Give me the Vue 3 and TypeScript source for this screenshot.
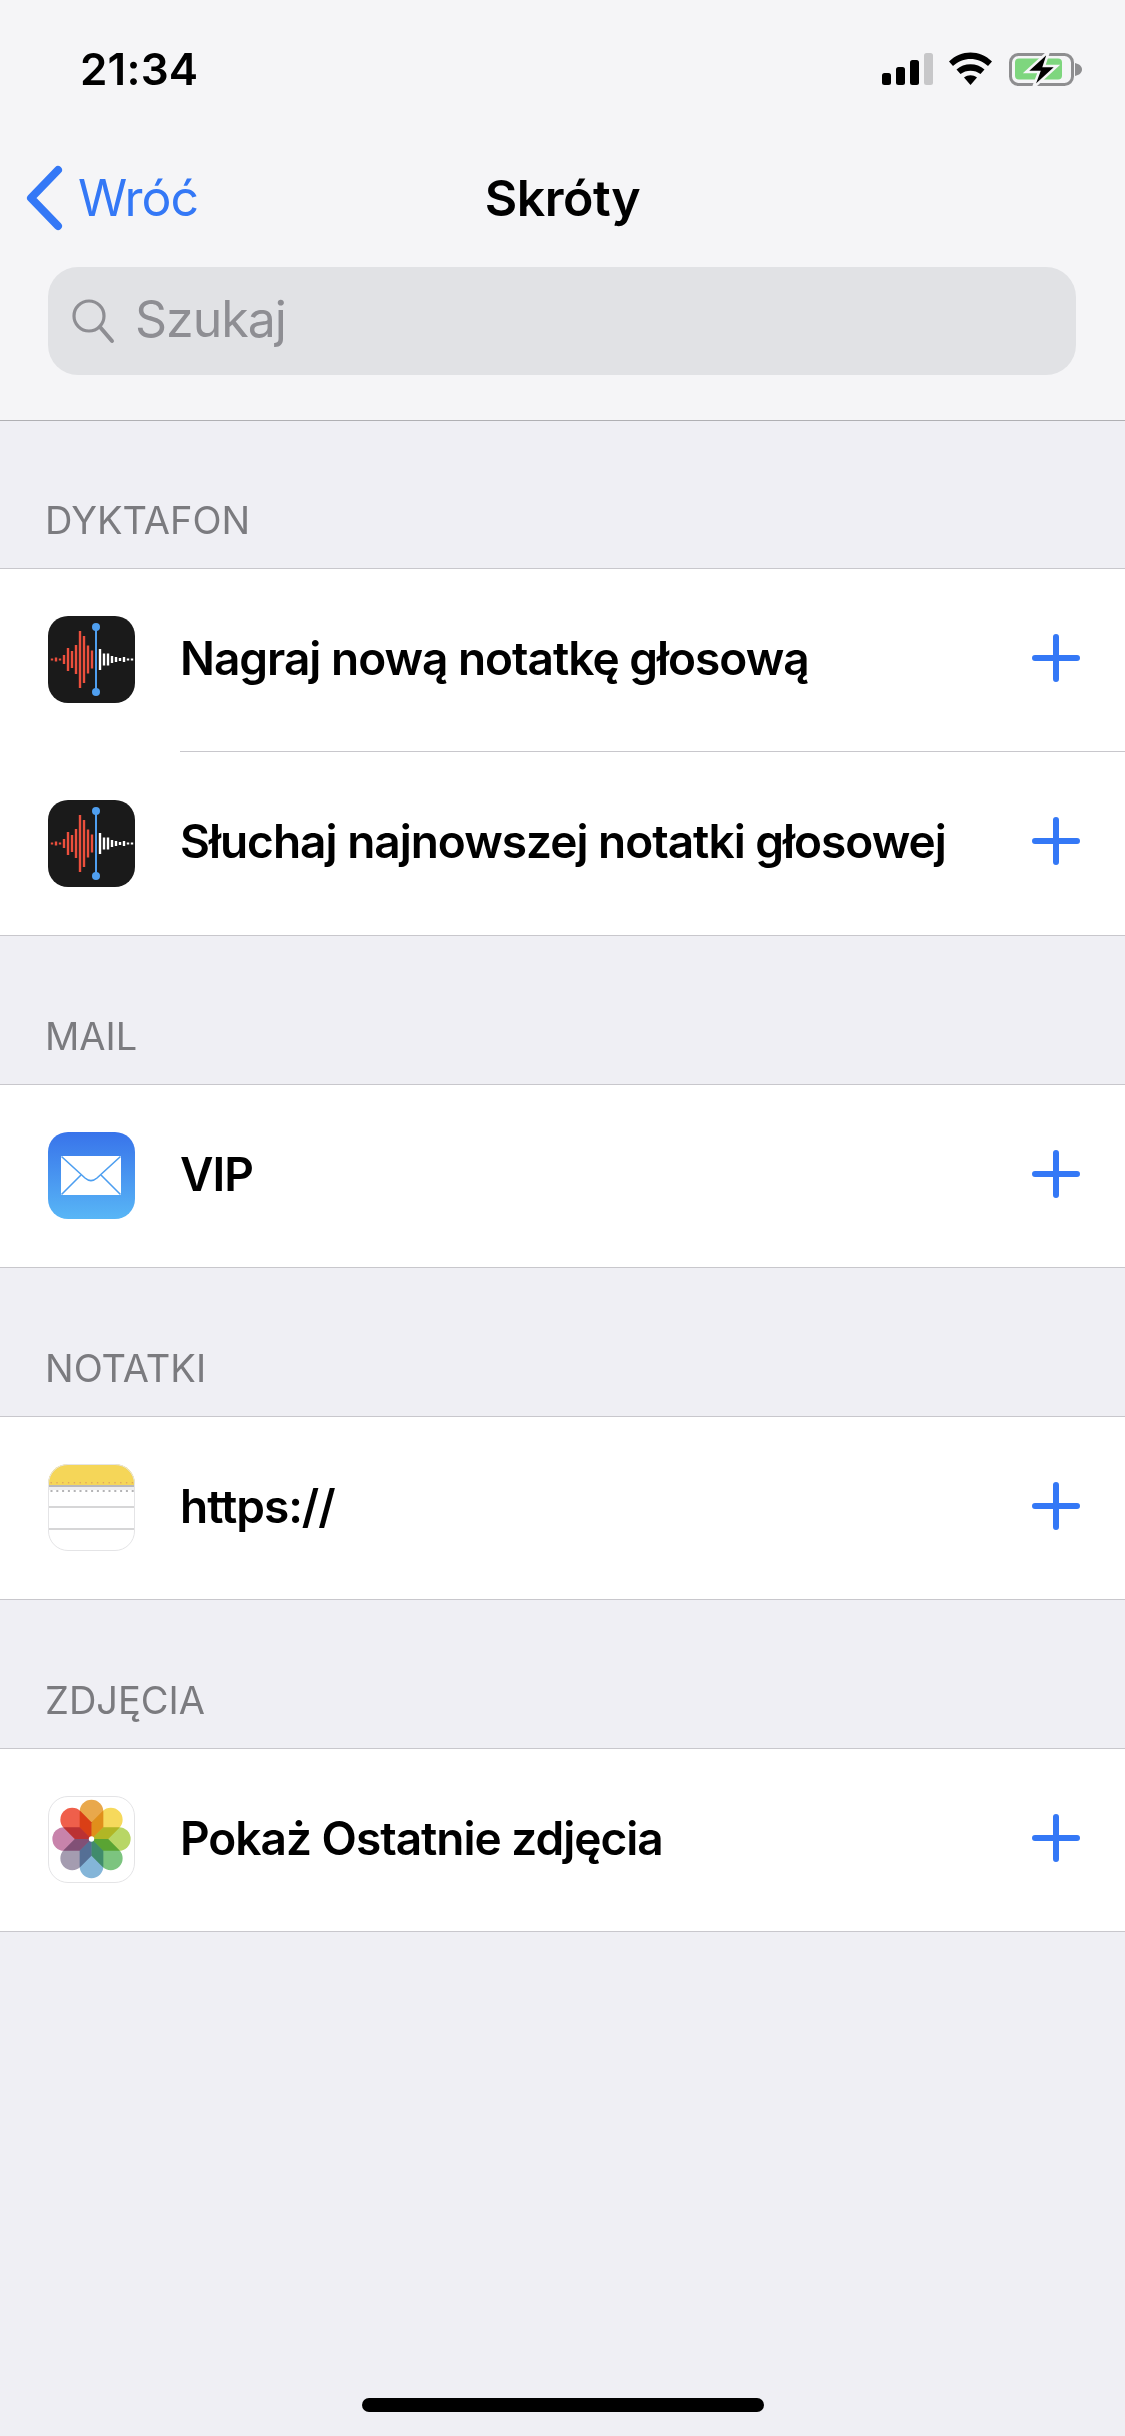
<script setup lang="ts">
interface Shortcut {
  title: string;
  icon: "memo" | "mail" | "notes" | "photos";
}

interface Section {
  label: string;
  items: Shortcut[];
}

const sections: Section[] = [
  {
    label: "DYKTAFON",
    items: [
      { title: "Nagraj nową notatkę głosową", icon: "memo" },
      { title: "Słuchaj najnowszej notatki głosowej", icon: "memo" }
    ]
  },
  { label: "MAIL", items: [{ title: "VIP", icon: "mail" }] },
  { label: "NOTATKI", items: [{ title: "https://", icon: "notes" }] },
  { label: "ZDJĘCIA", items: [{ title: "Pokaż Ostatnie zdjęcia", icon: "photos" }] }
];

// heights of the waveform bars, left to right, either side of the playhead
const redBars = [2, 4, 2, 9, 23, 17, 29, 57, 47, 28, 18];
const whiteBars = [21, 12, 12, 7, 5, 3, 5, 2, 2];

const petals = ["#e9a84b", "#f6d95c", "#b8d665", "#7cc47f", "#84b5d8", "#a49cb0", "#c883ab", "#ef5f4b"];

const notesDots = Array.from({ length: 15 }, (_, i) => 2.5 + i * 5.8);
</script>

<template>
  <div class="screen">
    <header class="top">
      <div class="status">
        <span class="time">21:34</span>
        <svg class="status-icons" viewBox="880 50 205 38" width="205" height="38">
          <rect x="882" y="73" width="9" height="12" rx="2.5" fill="#000" />
          <rect x="896" y="67" width="9" height="18" rx="2.5" fill="#000" />
          <rect x="910" y="60" width="9" height="25" rx="2.5" fill="#000" />
          <rect x="924" y="53" width="9" height="32" rx="2.5" fill="#c7c7c9" />
          <path d="M949 61.5 C961 49.5 980 49.5 992 61.5 L988 66 C978 56.5 963 56.5 953 66 Z" fill="#000" />
          <path d="M956.5 69.5 C964 62.5 977 62.5 984.5 69.5 L980.5 74 C975 69.5 966 69.5 960.5 74 Z" fill="#000" />
          <path d="M964 77.5 C968 74.5 973 74.5 977 77.5 L970.5 85 Z" fill="#000" />
          <rect x="1010.5" y="54.5" width="62" height="30" rx="8" fill="none" stroke="#8e8e90" stroke-width="3" />
          <path d="M1075 63 C1079 64 1082 66 1082 69.5 C1082 73 1079 75 1075 76 Z" fill="#8e8e90" />
          <rect x="1015" y="58.5" width="47" height="21" rx="4" fill="#7ed67e" />
          <path d="M1049 51 L1026 72 H1039 L1033 88 L1057 66 H1044 Z" fill="#000" stroke="#f5f5f7" stroke-width="2.5" stroke-linejoin="miter" />
        </svg>
      </div>

      <nav class="nav">
        <div class="back">
          <svg class="chevron" viewBox="0 0 38 66" width="38" height="66">
            <path d="M33 5 L6 33 L33 61" fill="none" stroke="#3478f6" stroke-width="8" stroke-linecap="round" stroke-linejoin="round" />
          </svg>
          <span>Wróć</span>
        </div>
        <div class="nav-title">Skróty</div>
        <div></div>
      </nav>

      <div class="search">
        <svg class="search-icon" viewBox="0 0 44 46" width="44" height="46">
          <circle cx="18" cy="18" r="15" fill="none" stroke="#8e8e93" stroke-width="3.2" />
          <path d="M29 29 L41 43" fill="none" stroke="#8e8e93" stroke-width="4" stroke-linecap="round" />
        </svg>
        <span class="search-text">Szukaj</span>
      </div>
    </header>

    <section v-for="section in sections" :key="section.label" class="section">
      <div class="section-label">{{ section.label }}</div>
      <ul class="list">
        <li v-for="item in section.items" :key="item.title" class="row">
          <svg v-if="item.icon === 'memo'" class="app-icon" viewBox="0 0 87 87">
            <rect width="87" height="87" rx="20" fill="#1a1a1a" />
            <rect
              v-for="(h, i) in redBars"
              :key="'r' + i"
              :x="2.8 + i * 4"
              :y="43.5 - h / 2"
              width="2.4"
              :height="h"
              fill="#ec4f3d"
            />
            <rect
              v-for="(h, i) in whiteBars"
              :key="'w' + i"
              :x="50.8 + i * 4"
              :y="43.5 - h / 2"
              width="2.4"
              :height="h"
              fill="#fff"
            />
            <rect x="47" y="11" width="2" height="65" fill="#4f9ff0" />
            <circle cx="48" cy="11" r="4" fill="#4f9ff0" />
            <circle cx="48" cy="76" r="4" fill="#4f9ff0" />
          </svg>

          <svg v-else-if="item.icon === 'mail'" class="app-icon" viewBox="0 0 87 87">
            <defs>
              <linearGradient id="mailBg" x1="0" x2="0" y1="0" y2="1">
                <stop offset="0%" stop-color="#3873ea" />
                <stop offset="100%" stop-color="#58b6f6" />
              </linearGradient>
            </defs>
            <rect width="87" height="87" rx="20" fill="url(#mailBg)" />
            <rect x="13" y="24" width="60" height="39" fill="#fff" />
            <path d="M13.5 24.5 L37 46 C41 49.5 45 49.5 49 46 L72.5 24.5" fill="none" stroke="#4c9ef0" stroke-width="1.6" />
            <path d="M13.5 62.5 L33 43 M72.5 62.5 L53 43" fill="none" stroke="#4c9ef0" stroke-width="1.6" />
          </svg>

          <svg v-else-if="item.icon === 'notes'" class="app-icon" viewBox="0 0 87 87">
            <defs>
              <clipPath id="notesClip">
                <rect width="87" height="87" rx="20" />
              </clipPath>
            </defs>
            <g clip-path="url(#notesClip)">
              <rect width="87" height="87" fill="#fff" />
              <rect width="87" height="21" fill="#f5d658" />
              <rect y="21" width="87" height="2" fill="#b9b9bb" />
              <rect y="23" width="87" height="3" fill="#eeeeef" />
              <rect v-for="x in notesDots" :key="x" :x="x" y="26" width="2" height="2" fill="#b4b4b6" />
              <rect v-for="x in notesDots" :key="'y' + x" :x="x" y="18" width="1.4" height="1.4" fill="#e0a85c" />
              <rect y="42.5" width="87" height="1" fill="#aeaeb0" />
              <rect y="64.5" width="87" height="1" fill="#aeaeb0" />
            </g>
            <rect x="0.5" y="0.5" width="86" height="86" rx="19.5" fill="none" stroke="#e4e4e6" />
          </svg>

          <svg v-else class="app-icon" viewBox="0 0 87 87">
            <rect x="0.5" y="0.5" width="86" height="86" rx="19.5" fill="#fff" stroke="#e4e4e6" />
            <g transform="translate(43.5 43) scale(1.03)">
              <path
                v-for="(color, i) in petals"
                :key="color"
                class="petal"
                d="M0 0 L-11.5 -11.5 V-26.5 A11.5 11.5 0 0 1 11.5 -26.5 V-11.5 Z"
                :fill="color"
                :transform="`rotate(${i * 45})`"
              />
              <circle r="2.6" fill="#fff" />
            </g>
          </svg>

          <div class="row-body">
            <span class="row-title">{{ item.title }}</span>
            <svg class="plus" viewBox="0 0 48 48" width="48" height="48">
              <path d="M3 24 H45 M24 3 V45" fill="none" stroke="#3478f6" stroke-width="6" stroke-linecap="round" />
            </svg>
          </div>
        </li>
      </ul>
    </section>

    <div class="home-bar"></div>
  </div>
</template>

<style>
html,
body {
  margin: 0;
  background: #efeff4;
}
</style>

<style scoped>
.screen {
  position: relative;
  width: 1125px;
  min-height: 2436px;
  background: #efeff4;
  font-family: Inter, "Liberation Sans", sans-serif;
  color: #000;
  overflow: hidden;
}

.top {
  height: 421px;
  box-sizing: border-box;
  background: #f5f5f7;
  border-bottom: 1px solid #b0b0b3;
}

.status {
  height: 136px;
  display: flex;
  justify-content: space-between;
  align-items: flex-start;
  padding: 50px 40px 0 80px;
  box-sizing: border-box;
}

.time {
  font-size: 44px;
  line-height: 38px;
  font-weight: 600;
  letter-spacing: 0.2px;
}

.status-icons {
  display: block;
}

.nav {
  height: 124px;
  display: grid;
  grid-template-columns: 1fr auto 1fr;
  align-items: center;
  padding: 0 25px;
  box-sizing: border-box;
}

.back {
  display: flex;
  align-items: center;
  gap: 15px;
  color: #3478f6;
  font-size: 50px;
  letter-spacing: -1px;
}

.chevron {
  display: block;
}

.nav-title {
  font-size: 50px;
  font-weight: 600;
  letter-spacing: -0.5px;
}

.search {
  margin: 7px 49px 0 48px;
  height: 108px;
  border-radius: 30px;
  background: #e1e2e5;
  display: flex;
  align-items: center;
  gap: 20px;
  padding-left: 23px;
  color: #8e8e93;
  font-size: 50px;
  letter-spacing: -1px;
}

.search-icon {
  display: block;
}

.search-text {
  padding-bottom: 5px;
}

.section-label {
  height: 148px;
  box-sizing: border-box;
  display: flex;
  align-items: flex-end;
  padding: 0 0 25px 45px;
  font-size: 38px;
  line-height: 46px;
  color: #7b7b7f;
}

.section:first-of-type .section-label {
  height: 147px;
}

.list {
  list-style: none;
  margin: 0;
  padding: 0;
  background: #fff;
  border-top: 1px solid #c8c7cc;
  border-bottom: 1px solid #c8c7cc;
}

.row {
  display: flex;
  align-items: center;
  height: 182px;
  padding-left: 48px;
}

.row + .row {
  height: 184px;
}

.app-icon {
  width: 87px;
  height: 87px;
  flex: none;
  display: block;
  margin: 0 45px 2px 0;
}

.row + .row .app-icon {
  margin-bottom: 0;
}

.petal {
  mix-blend-mode: multiply;
}

.row-body {
  flex: 1;
  align-self: stretch;
  display: flex;
  align-items: center;
  justify-content: space-between;
  padding-right: 45px;
}

.row + .row .row-body {
  border-top: 1px solid #c8c7cc;
}

.row-title {
  font-size: 46px;
  font-weight: 600;
  letter-spacing: -1px;
  padding-bottom: 5px;
}

.plus {
  display: block;
  margin-bottom: 5px;
}

.home-bar {
  position: absolute;
  left: 362px;
  bottom: 24px;
  width: 402px;
  height: 14px;
  border-radius: 7px;
  background: #000;
}
</style>
